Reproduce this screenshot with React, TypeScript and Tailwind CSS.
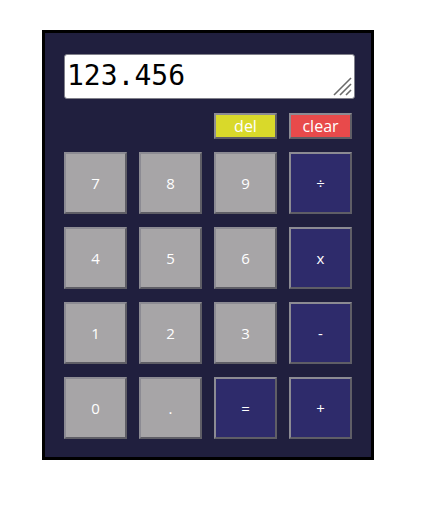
import React, { useState } from "react";

const numCls =
  "w-[63px] h-[62px] bg-[#a7a5a7] border-2 border-t-[#8c8b93] border-l-[#8c8b93] border-b-[#5f5e66] border-r-[#5f5e66] text-white text-[15px] flex items-center justify-center";
const opCls =
  "w-[63px] h-[62px] bg-[#2e2b6b] border-2 border-t-[#8c8b93] border-l-[#8c8b93] border-b-[#5f5e66] border-r-[#5f5e66] text-white text-[15px] flex items-center justify-center";

export default function App() {
  const [val, setVal] = useState("123.456");
  const keys: { k: string; op?: boolean }[] = [
    { k: "7" }, { k: "8" }, { k: "9" }, { k: "÷", op: true },
    { k: "4" }, { k: "5" }, { k: "6" }, { k: "x", op: true },
    { k: "1" }, { k: "2" }, { k: "3" }, { k: "-", op: true },
    { k: "0" }, { k: "." }, { k: "=", op: true }, { k: "+", op: true },
  ];
  return (
    <div className="w-[429px] h-[511px] bg-white pt-[30px] pl-[42px]" style={{ fontFamily: '"Open Sans", sans-serif' }}>
      <div className="w-[332px] h-[430px] border-[3px] border-black bg-[#201f3e] pt-[21px] pl-[19px] flex flex-col">
        <div className="relative w-[291px] h-[45px]">
          <textarea
            value={val}
            onChange={(e) => setVal(e.target.value)}
            className="block w-[291px] h-[45px] bg-white border border-[#80808a] rounded-[3px] pl-[2px] pt-[5px] text-[28px] leading-[1.15] text-black outline-none resize-none"
            style={{ fontFamily: '"DejaVu Sans Mono", monospace' }}
          />
          <svg className="absolute right-[3px] bottom-[3px] pointer-events-none" width="20" height="20" viewBox="0 0 20 20">
            <g stroke="#6a6a6a" strokeWidth="1.6">
              <line x1="2" y1="19" x2="19" y2="2" />
              <line x1="8" y1="19" x2="19" y2="8" />
              <line x1="14" y1="19" x2="19" y2="14" />
            </g>
          </svg>
        </div>
        <div className="flex gap-[12px] mt-[14px] ml-[150px]">
          <button className="w-[63px] h-[26px] bg-[#d9d92a] border-2 border-t-[#8c8b93] border-l-[#8c8b93] border-b-[#5f5e66] border-r-[#5f5e66] text-white text-[16px] leading-none flex items-center justify-center">
            del
          </button>
          <button className="w-[63px] h-[26px] bg-[#e84a4b] border-2 border-t-[#8c8b93] border-l-[#8c8b93] border-b-[#5f5e66] border-r-[#5f5e66] text-white text-[16px] leading-none flex items-center justify-center">
            clear
          </button>
        </div>
        <div className="grid grid-cols-[repeat(4,63px)] gap-x-[12px] gap-y-[13px] mt-[13px]">
          {keys.map(({ k, op }) => (
            <button key={k} className={op ? opCls : numCls}>
              {k}
            </button>
          ))}
        </div>
      </div>
    </div>
  );
}
